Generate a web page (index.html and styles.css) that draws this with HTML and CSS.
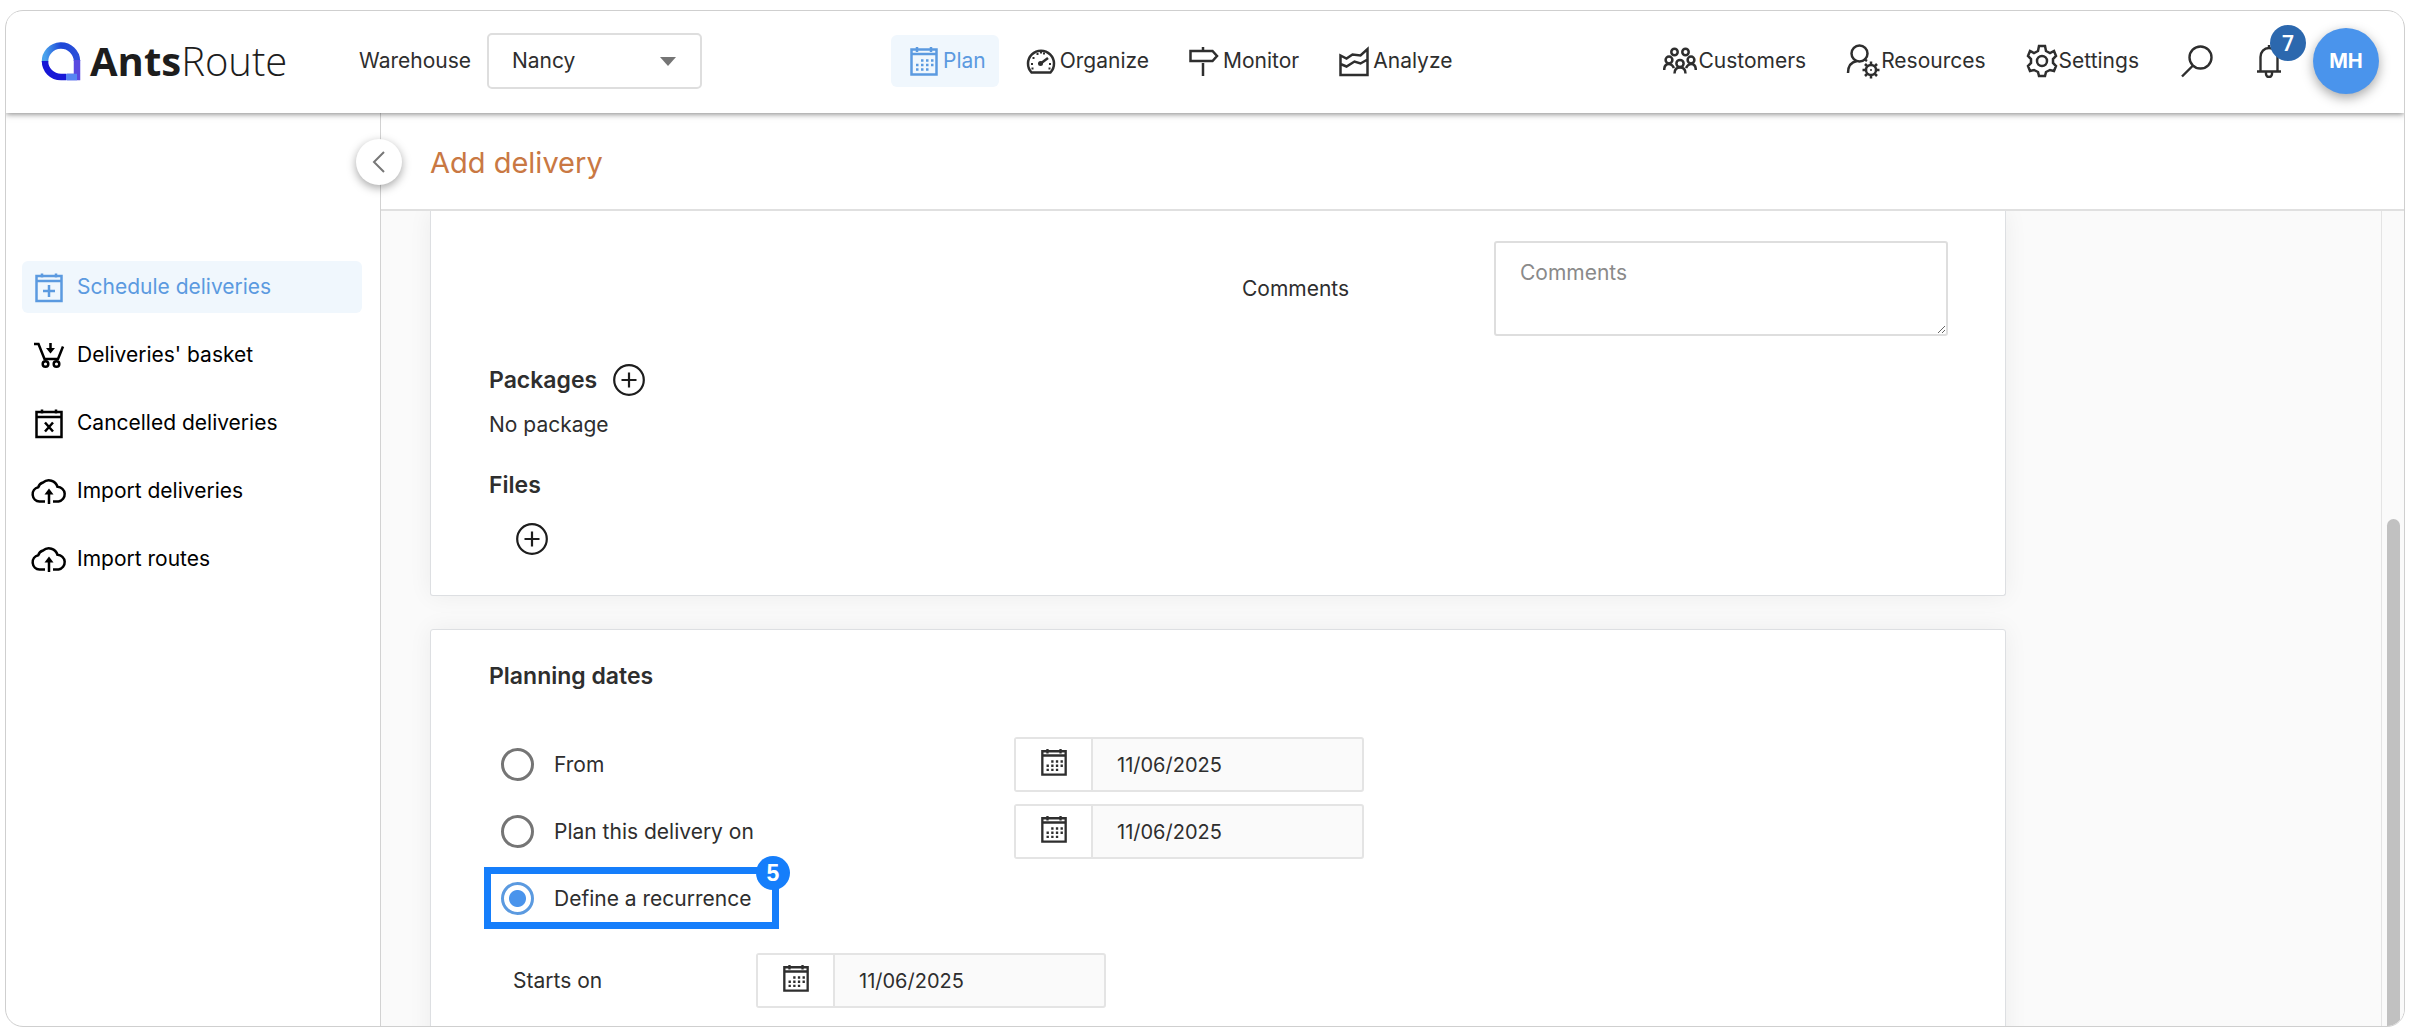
FILE: index.html
```html
<!DOCTYPE html>
<html lang="en">
  <head>
    <meta charset="UTF-8" />
    <meta name="viewport" content="width=device-width, initial-scale=1.0" />
    <title>AntsRoute - Add delivery</title>
    <link rel="stylesheet" href="styles.css">
  </head>
  <body>
    <!-- shared icons -->
    <svg class="sprite" aria-hidden="true">
      <symbol id="calendar" viewBox="0 0 30 32">
        <path d="M2.500 4.500h25v25h-25zM2.500 9h25M8 2v5M22 2v5" fill="none" stroke="currentColor" stroke-width="2.500" />
        <path d="M12 15.500h13M7 20h18M7 24.500h13" fill="none" stroke="currentColor" stroke-width="2.500" stroke-dasharray="2.500 2.500" />
      </symbol>
      <symbol id="plus" viewBox="0 0 32 32">
        <circle cx="16" cy="16" r="14.800" fill="none" stroke="currentColor" stroke-width="2.200" />
        <path d="M16 8.500v15M8.500 16h15" stroke="currentColor" stroke-width="2.200" />
      </symbol>
      <symbol id="cloud" viewBox="0 0 36 28">
        <path d="M14 24.500H8.500a7.200 7.200 0 0 1-1.300-14.200A7 7 0 0 1 12 5.500a9 9 0 0 1 14.500 4.300 7.400 7.400 0 0 1 1 14.700H22M18 27V14" fill="none" stroke="currentColor" stroke-width="2.500" />
        <path d="M18 11.500l4.500 6h-9z" fill="currentColor" />
      </symbol>
    </svg>

    <div class="app">
      <header>
        <a class="logo" href="#">
          <svg width="40" height="40" viewBox="0 0 40 40" aria-hidden="true">
            <defs>
              <linearGradient id="ring-top" x1="0" y1="0" x2="1" y2="0">
                <stop offset="0" stop-color="#4aa3ec" />
                <stop offset="0.500" stop-color="#1d46d8" />
                <stop offset="1" stop-color="#2a4fd8" />
              </linearGradient>
            </defs>
            <path d="M4 21a16 16 0 0 1 32-1" fill="none" stroke="url(#ring-top)" stroke-width="6.500" />
            <path d="M36 19v17H26" fill="none" stroke="#5a49e0" stroke-width="6.500" />
            <path d="M25 36h11" fill="none" stroke="#5585f3" stroke-width="6.500" />
            <path d="M4 20c0 9 7 16 16 16h5" fill="none" stroke="#1717d6" stroke-width="6.500" />
          </svg>
          <span><b>Ants</b>Route</span>
        </a>

        <div class="warehouse">
          <label for="warehouse">Warehouse</label>
          <div class="select">
            <select id="warehouse">
              <option>Nancy</option>
            </select>
          </div>
        </div>

        <nav class="main-nav">
          <a class="active" href="#"><svg width="30" height="32"><use href="#calendar" /></svg>Plan</a>
          <a href="#">
            <svg width="30" height="32" viewBox="0 0 30 32" fill="none" stroke="currentColor" stroke-width="2.500">
              <path d="M5.500 27.500a13 13 0 1 1 19 0z" />
              <path d="M5 19h2M6.500 13h2M10.500 9h2M17 8.500h2M23 19h2M5.500 23.500h2M22.500 23.500h2M14 7.500h2" stroke-width="2" />
              <path d="M14 19l8-6" />
              <circle cx="14.500" cy="18.500" r="2.500" fill="currentColor" stroke="none" />
            </svg>Organize</a>
          <a href="#">
            <svg width="30" height="32" viewBox="0 0 30 32" fill="none" stroke="currentColor" stroke-width="2.500">
              <path d="M1.500 6h22l4.500 5-4.500 5h-22zM14 2v3M14 18v13" />
            </svg>Monitor</a>
          <a href="#">
            <svg width="30" height="32" viewBox="0 0 30 32" fill="none" stroke="currentColor" stroke-width="2.500">
              <path d="M1.500 10.500v19.500h27V4l-7 6.500-8-1-6 4zM1.500 19l6 2.500 8-5 6 2 7-4" />
            </svg>Analyze</a>
        </nav>

        <nav class="side-nav">
          <a href="#">
            <svg width="34" height="32" viewBox="0 0 34 32" fill="none" stroke="currentColor" stroke-width="2.500">
              <circle cx="11.500" cy="7" r="3.200" />
              <circle cx="22.500" cy="7" r="3.200" />
              <circle cx="6" cy="15" r="3.400" />
              <circle cx="28" cy="15" r="3.400" />
              <circle cx="17" cy="18.500" r="3.600" />
              <path d="M1.200 25c0-4 2-6 4.800-6s4 2 5 4M32.800 25c0-4-2-6-4.800-6s-4 2-5 4M11.500 28.500c0-4 2-6 5.500-6s5.500 2 5.500 6" />
            </svg>Customers</a>
          <a href="#">
            <svg width="34" height="38" viewBox="0 0 34 38" fill="none" stroke="currentColor" stroke-width="2.500">
              <circle cx="13.500" cy="11.500" r="8" />
              <path d="M2 31c0-7 3-11 9-12M18 17l3 2" />
              <circle cx="25" cy="28" r="5" />
              <circle cx="25" cy="28" r="1" fill="currentColor" stroke="none" />
              <path d="M25 19.500v3M25 33.500v3M16.500 28h3M30.500 28h3M19 22l2 2M29 32l2 2M19 34l2-2M29 24l2-2" />
            </svg>Resources</a>
          <a href="#">
            <svg width="32" height="34" viewBox="0 0 32 34" fill="none" stroke="currentColor" stroke-width="2.500">
              <path d="M13 2h6l1 5 4 2 4-2 2 5-3 3v4l3 3-2 5-4-1-4 2-1 4h-6l-1-4-4-2-4 1-2-5 3-3v-4l-3-3 2-5 4 2 4-2z" />
              <circle cx="16" cy="17" r="5" />
            </svg>Settings</a>
        </nav>

        <div class="tools">
          <button type="button" aria-label="Search">
            <svg width="34" height="34" viewBox="0 0 34 34" fill="none" stroke="currentColor" stroke-width="2.400">
              <circle cx="20.500" cy="13.500" r="11" />
              <path d="M13 21.500L2 32.500" />
            </svg>
          </button>
          <button class="bell" type="button" aria-label="Notifications">
            <svg width="26" height="34" viewBox="0 0 26 34" fill="none" stroke="currentColor" stroke-width="2.400">
              <path d="M1 27.500h24M4.500 27V13c0-5 3.500-9 8.500-9s8.500 4 8.500 9v14M13 1v3" />
              <path d="M10 28v2a3 3 0 0 0 6 0V28" />
            </svg>
            <span class="badge">7</span>
          </button>
          <button class="avatar" type="button">MH</button>
        </div>
      </header>

      <div class="layout">
        <aside>
          <a class="active" href="#">
            <svg width="36" height="32" viewBox="0 0 36 32" fill="none" stroke="currentColor" stroke-width="2.500">
              <path d="M5.500 5h25v25h-25zM5.500 10h25M11 2.500v4M25 2.500v4M18 14v12M12 20h12" />
            </svg>Schedule deliveries</a>
          <a href="#">
            <svg width="36" height="32" viewBox="0 0 36 32" fill="none" stroke="currentColor" stroke-width="2.500">
              <path d="M3 5h4.500l6 15H27l5-12.500M19.500 4v5" />
              <path d="M19.500 14.500l4.500-5.500h-9z" fill="currentColor" stroke="none" />
              <circle cx="14.500" cy="25" r="2.800" />
              <circle cx="25.500" cy="25" r="2.800" />
            </svg>Deliveries' basket</a>
          <a href="#">
            <svg width="36" height="32" viewBox="0 0 36 32" fill="none" stroke="currentColor" stroke-width="2.500">
              <path d="M5.500 5h25v25h-25zM5.500 10h25M11 2.500v4M25 2.500v4M14 15.500l8 9M22 15.500l-8 9" />
            </svg>Cancelled deliveries</a>
          <a href="#"><svg width="36" height="28"><use href="#cloud" /></svg>Import deliveries</a>
          <a href="#"><svg width="36" height="28"><use href="#cloud" /></svg>Import routes</a>
        </aside>

        <main>
          <div class="title-bar">
            <button class="collapse" type="button" aria-label="Collapse menu">
              <svg width="14" height="22" viewBox="0 0 14 22" fill="none" stroke="#777" stroke-width="2">
                <path d="M12 1L2 11l10 10" />
              </svg>
            </button>
            <h1>Add delivery</h1>
          </div>

          <div class="scroll">
            <form class="content">
              <section class="card card-top">
                <div class="comments">
                  <label for="comments">Comments</label>
                  <textarea id="comments" placeholder="Comments"></textarea>
                </div>
                <div class="packages">
                  <h2>Packages</h2>
                  <button class="add" type="button" aria-label="Add package"><svg width="32" height="32"><use href="#plus" /></svg></button>
                </div>
                <p>No package</p>
                <h2>Files</h2>
                <button class="add add-file" type="button" aria-label="Add file"><svg width="32" height="32"><use href="#plus" /></svg></button>
              </section>

              <section class="card planning">
                <h2>Planning dates</h2>
                <div class="row">
                  <label class="choice"><input type="radio" name="planning" />From</label>
                  <div class="date">
                    <button type="button" aria-label="Open calendar"><svg width="28" height="30"><use href="#calendar" /></svg></button>
                    <input type="text" value="11/06/2025" aria-label="From date" />
                  </div>
                </div>
                <div class="row">
                  <label class="choice"><input type="radio" name="planning" />Plan this delivery on</label>
                  <div class="date">
                    <button type="button" aria-label="Open calendar"><svg width="28" height="30"><use href="#calendar" /></svg></button>
                    <input type="text" value="11/06/2025" aria-label="Delivery date" />
                  </div>
                </div>
                <div class="row">
                  <label class="choice"><input type="radio" name="planning" checked />Define a recurrence</label>
                  <div class="highlight"><span>5</span></div>
                </div>
                <div class="row starts">
                  <label for="starts">Starts on</label>
                  <div class="date">
                    <button type="button" aria-label="Open calendar"><svg width="28" height="30"><use href="#calendar" /></svg></button>
                    <input id="starts" type="text" value="11/06/2025" />
                  </div>
                </div>
              </section>
            </form>
            <div class="track"><div class="thumb"></div></div>
          </div>
        </main>
      </div>
    </div>
  </body>
</html>
```
FILE: styles.css
```css
:root {
  --text: #2e2e2e;
  --blue: #4a94ec;
  --link: #5b9ae0;
  --light-blue: #f0f7fd;
  --step: #157efb;
  --border: #dedede;
  --orange: #c97843;
}
* {
  box-sizing: border-box;
}
body {
  margin: 0;
  padding: 10px 5px 8px;
  height: 100vh;
  background: white;
  color: var(--text);
  font-family: Inter, "Liberation Sans", sans-serif;
  font-size: 21px;
  line-height: 28px;
}
button, input, select, textarea {
  font: inherit;
  color: inherit;
}
button {
  padding: 0;
  border: none;
  background: none;
  display: flex;
  align-items: center;
  justify-content: center;
}
a {
  color: inherit;
  text-decoration: none;
}
svg {
  flex: none;
}
.sprite {
  position: absolute;
  width: 0;
  height: 0;
}
.app {
  height: 100%;
  display: flex;
  flex-direction: column;
  border: 1px solid #cfcfcf;
  border-radius: 18px;
  overflow: hidden;
}

/* header */
header {
  position: relative;
  z-index: 2;
  flex: none;
  height: 102px;
  padding: 0 25px 2px 35px;
  display: flex;
  align-items: center;
  background: white;
  box-shadow: 0 1px 6px rgba(0, 0, 0, 0.5);
}
.logo {
  display: flex;
  align-items: center;
  gap: 9px;
  width: 318px;
  color: #1d1d1d;
  font-family: "Open Sans", sans-serif;
  font-size: 40px;
  font-weight: 300;

  b {
    font-weight: 700;
  }
}
.warehouse {
  display: flex;
  align-items: center;
  gap: 14px;
  width: 532px;
}
.warehouse label {
  width: 114px;
}
.select {
  position: relative;
  width: 215px;

  &::after {
    content: "";
    position: absolute;
    right: 26px;
    top: 24px;
    border: 8px solid transparent;
    border-top: 9px solid #757575;
    pointer-events: none;
  }
}
.select select {
  width: 100%;
  height: 56px;
  padding: 0 23px;
  appearance: none;
  background: white;
  border: 2px solid var(--border);
  border-radius: 5px;
}
.main-nav, .side-nav {
  display: flex;
  gap: 9px;

  a {
    height: 52px;
    padding: 0 13px 0 18px;
    display: flex;
    align-items: center;
    gap: 4px;
    border-radius: 6px;
  }
  .active {
    color: var(--link);
    background: var(--light-blue);
  }
}
.side-nav {
  margin-left: auto;

  a {
    gap: 1px;
  }
}
.tools {
  display: flex;
  align-items: center;
  margin-left: 28px;
}
.bell {
  position: relative;
  margin: 0 31px 0 42px;
}
.badge {
  position: absolute;
  left: 14px;
  top: -19px;
  width: 36px;
  line-height: 36px;
  border-radius: 50%;
  background: #2c68ae;
  color: white;
  font-family: "Noto Sans", sans-serif;
  font-weight: 600;
}
.avatar {
  width: 66px;
  height: 66px;
  border-radius: 50%;
  background: var(--blue);
  color: white;
  font-size: 20px;
  font-weight: 700;
  box-shadow: 0 4px 12px rgba(0, 0, 0, 0.35);
}

/* left menu */
.layout {
  flex: 1;
  min-height: 0;
  display: flex;
}
aside {
  flex: none;
  width: 375px;
  padding: 148px 18px 0 16px;
  display: flex;
  flex-direction: column;
  gap: 16px;
  border-right: 1px solid #d2d2d2;
  color: black;

  a {
    height: 52px;
    padding: 0 9px;
    display: flex;
    align-items: center;
    gap: 10px;
    border-radius: 6px;
  }
  .active {
    color: var(--link);
    background: var(--light-blue);
  }
}

/* page */
main {
  flex: 1;
  min-width: 0;
  display: flex;
  flex-direction: column;
}
.title-bar {
  position: relative;
  flex: none;
  height: 98px;
  padding: 3px 0 0 49px;
  display: flex;
  align-items: center;
  border-bottom: 2px solid #e0e0e0;
}
.title-bar h1 {
  margin: 0;
  color: var(--orange);
  font-size: 29px;
  font-weight: 400;
}
.collapse {
  position: absolute;
  left: -25px;
  top: 26px;
  width: 46px;
  height: 46px;
  border-radius: 50%;
  background: white;
  box-shadow: 0 3px 10px rgba(0, 0, 0, 0.35);
}
.scroll {
  flex: 1;
  min-height: 0;
  display: flex;
  overflow: hidden;
  background: #fafafa;
}
.content {
  flex: 1;
  padding: 0 375px 0 49px;
}
.track {
  width: 23px;
  padding: 308px 4px 0 5px;
  display: flex;
  border-left: 1px solid #e4e4e4;
}
.thumb {
  flex: 1;
  border-radius: 7px 7px 0 0;
  background: #c1c1c1;
}
.card {
  padding: 32px 57px 32px 58px;
  background: white;
  border: 1px solid #dddfe2;
  border-radius: 3px;
  box-shadow: 0 0 24px rgba(0, 0, 0, 0.06);

  p {
    margin: 15px 0 32px;
  }
  h2 {
    margin: 0;
    font-size: 23px;
    font-weight: 600;
  }
}
.card-top {
  margin-bottom: 33px;
  padding-top: 30px;
  padding-bottom: 40px;
  border-top: none;
  border-radius: 0 0 3px 3px;
}
.comments {
  display: flex;
  align-items: center;
  justify-content: flex-end;
}
.comments label {
  width: 252px;
}
.comments textarea {
  width: 454px;
  height: 95px;
  padding: 16px 24px;
  border: 2px solid var(--border);
  border-radius: 3px;
  outline: none;

  &::placeholder {
    color: #8a8a8a;
  }
}
.packages {
  margin-top: 28px;
  display: flex;
  align-items: center;
  gap: 16px;
}
.add {
  color: #1d1d1d;
}
.add-file {
  margin: 24px 0 0 27px;
}
.planning {
  height: 480px;
}
.planning h2 {
  margin-bottom: 47px;
}
.row {
  position: relative;
  height: 55px;
  margin-bottom: 12px;
  display: flex;
  align-items: center;
}
.choice {
  width: 525px;
  padding-left: 12px;
  display: flex;
  align-items: center;
  gap: 20px;
}
.choice input {
  appearance: none;
  margin: 0;
  width: 33px;
  height: 33px;
  border: 3px solid #757575;
  border-radius: 50%;

  &:checked {
    border-color: var(--link);
    background: radial-gradient(circle, var(--blue) 8px, white 9px);
  }
}
.highlight {
  position: absolute;
  left: -5px;
  top: -4px;
  width: 295px;
  height: 62px;
  border: 7px solid var(--step);
  pointer-events: none;

  span {
    position: absolute;
    right: -18px;
    top: -18px;
    width: 34px;
    line-height: 34px;
    border-radius: 50%;
    background: var(--step);
    color: white;
    font-family: "Liberation Sans", sans-serif;
    font-size: 23px;
    font-weight: 700;
    text-align: center;
  }
}
.starts {
  margin-top: 27px;
}
.starts label {
  width: 267px;
  padding-left: 24px;
}
.date {
  width: 350px;
  height: 55px;
  display: flex;
  border: 2px solid #e4e4e4;
  border-radius: 3px;
  background: #fafafa;

  button {
    width: 77px;
    padding-bottom: 5px;
    border-right: 2px solid #e4e4e4;
    background: white;
  }
  input {
    flex: 1;
    min-width: 0;
    padding: 0 24px;
    border: none;
    outline: none;
    background: none;
    font-size: 20px;
  }
}
```
